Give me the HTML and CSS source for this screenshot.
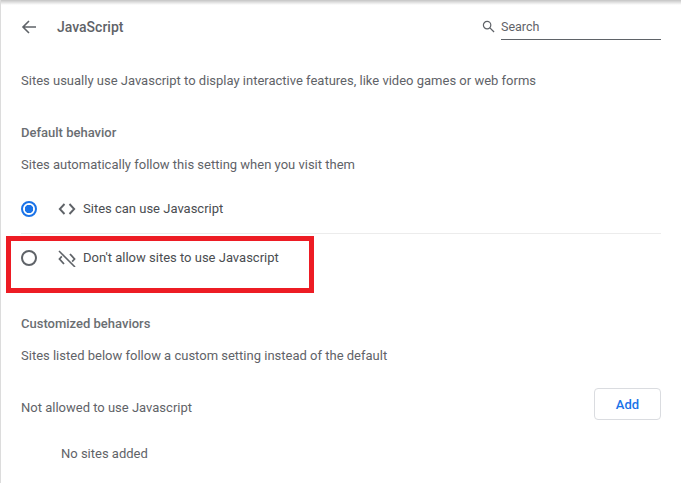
FILE: index.html
```html
<!DOCTYPE html>
<html lang="en">
<head>
<meta charset="utf-8">
<title>JavaScript</title>
<link rel="stylesheet" href="styles.css">
</head>
<body>
<div class="page">
  <header class="head">
    <svg class="back" viewBox="0 0 16 16"><path d="M15 8H2.5M8 2 2 8l6 6" fill="none" stroke="#5f6368" stroke-width="1.6"/></svg>
    <h1 class="title">JavaScript</h1>
    <div class="search">
      <svg class="search-icon" viewBox="0 0 14 14"><circle cx="5.5" cy="5.5" r="4" fill="none" stroke="#5f6368" stroke-width="1.3"/><path d="m8.5 8.5 4.5 4.500" stroke="#5f6368" stroke-width="1.4"/></svg>
      <div class="search-field">Search</div>
    </div>
  </header>
  <p class="intro">Sites usually use Javascript to display interactive features, like video games or web forms</p>
  <h2 class="section first">Default behavior</h2>
  <p class="sub">Sites automatically follow this setting when you visit them</p>
  <div class="option on">
    <span class="radio checked"></span>
    <svg class="code" viewBox="0 0 18 12"><path d="M6.500 1 1.800 6l4.700 5M11.500 1l4.700 5-4.700 5" fill="none" stroke="#5f6368" stroke-width="1.900"/></svg>
    <span class="option-label">Sites can use Javascript</span>
  </div>
  <div class="option off">
    <span class="radio"></span>
    <svg class="code" viewBox="0 0 18 18"><path d="M6 5 1.500 10 6 15M12 5l4.500 5L12 15" fill="none" stroke="#5f6368" stroke-width="1.800"/><path d="m1 2 16 16" stroke="#fff" stroke-width="3.500"/><path d="m1 2 16 16" stroke="#5f6368" stroke-width="1.600"/></svg>
    <span class="option-label">Don't allow sites to use Javascript</span>
  </div>
  <h2 class="section second">Customized behaviors</h2>
  <p class="sub">Sites listed below follow a custom setting instead of the default</p>
  <div class="list-head">
    <span class="list-label">Not allowed to use Javascript</span>
    <button class="add">Add</button>
  </div>
  <p class="empty">No sites added</p>
  <div class="highlight"></div>
</div>
</body>
</html>
```
FILE: styles.css
```css
html, body { margin: 0; padding: 0; }
body {
  background: #fff;
  width: 681px;
  height: 483px;
  overflow: hidden;
  font-family: Roboto, "Liberation Sans", sans-serif;
  font-size: 13px;
  color: #5f6368;
}
.page {
  position: relative;
  box-sizing: border-box;
  height: 483px;
  padding: 0 20px 0 20px;
  border-left: 1px solid #dcdcdc;
  background: linear-gradient(#c4c4c4, #e8e8e8 3px, #fff 5px) no-repeat top / 100% 5px;
}
.head { display: flex; align-items: center; height: 54px; }
.back { width: 16px; height: 16px; margin-right: 20px; }
.title { margin: 0; font-size: 14px; font-weight: 500; color: #5f6368; flex: 1; }
.search { display: flex; align-items: center; margin-top: 2px; }
.search-icon { width: 13px; height: 13px; margin-right: 6px; margin-top: -4px; }
.search-field { box-sizing: border-box; width: 160px; height: 24px; padding-top: 1px; line-height: 20px; font-size: 12.500px; border-bottom: 1px solid #5f6368; }
.intro { margin: 0; padding-top: 18px; line-height: 18px; height: 18px; }
.section { margin: 0; font-size: 13px; font-weight: 500; line-height: 18px; color: #6a6e72; }
.section.first { padding-top: 34px; }
.section.second { padding-top: 33px; }
.sub { margin: 0; padding-top: 14px; line-height: 18px; }
.option { display: flex; align-items: center; height: 48px; font-size: 13px; color: #4a4d51; }
.option.on { margin-top: 11px; border-bottom: 1px solid #ececec; }
.option-label { padding-bottom: 2px; }
.radio { box-sizing: border-box; width: 16px; height: 16px; border-radius: 50%; border: 2px solid #5f6368; margin-right: 21px; }
.radio.checked { border-color: #1a73e8; background: radial-gradient(circle, #1a73e8 0 4px, #fff 4.500px); }
.code { width: 18px; height: 18px; margin-right: 7px; }
.list-head { display: flex; align-items: flex-start; justify-content: space-between; padding-top: 23px; }
.list-label { padding-top: 11px; line-height: 18px; }
.add {
  box-sizing: border-box;
  width: 67px;
  height: 32px;
  background: #fff;
  border: 1px solid #dadce0;
  border-radius: 4px;
  color: #1a73e8;
  font: 500 13px Roboto, "Liberation Sans", sans-serif;
}
.empty { margin: 0; padding: 25px 0 0 40px; line-height: 18px; }
.highlight {
  position: absolute;
  left: 5px;
  top: 236px;
  width: 298px;
  height: 47px;
  border: 5px solid #ed1c24;
}
```
